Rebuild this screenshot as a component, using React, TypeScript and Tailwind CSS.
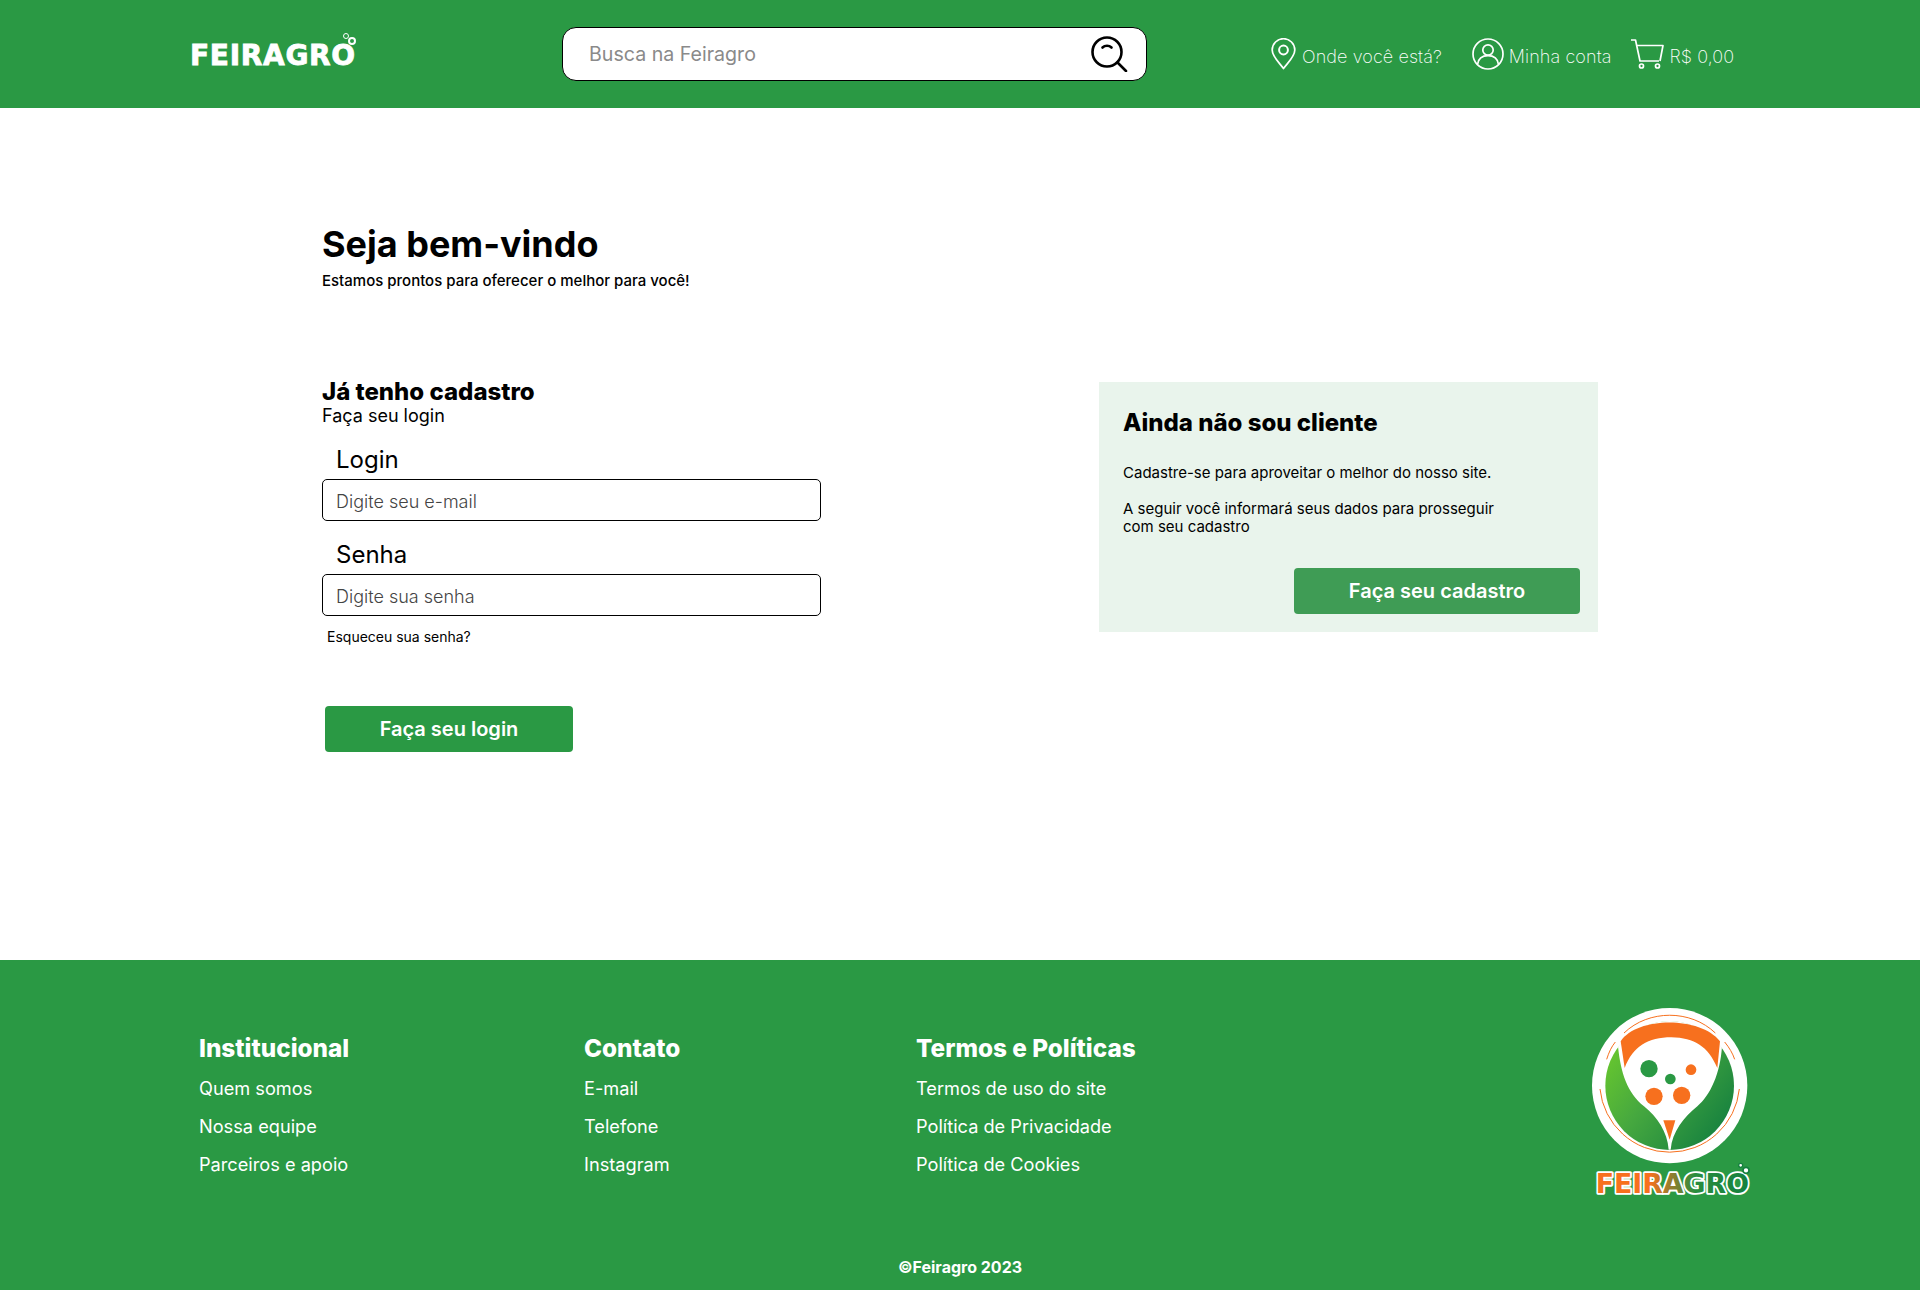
const font = { fontFamily: "Inter, 'Liberation Sans', sans-serif" };

function SearchIcon() {
  return (
    <svg width="37" height="36" viewBox="0 0 37 36" fill="none" stroke="#000" strokeWidth="2.6" strokeLinecap="round">
      <circle cx="16" cy="16" r="14.500" />
      <path d="M11.500 11.500c2.500-2.400 6.500-2.400 9 0" />
      <path d="M26.500 26.500l8.500 8.500" />
    </svg>
  );
}

function PinIcon() {
  return (
    <svg width="25" height="32" viewBox="0 0 25 32" fill="none" stroke="#fff" strokeWidth="1.700">
      <path d="M12.500 30.500C8 24.500 1.200 18.500 1.200 12A11.300 11.300 0 0 1 23.800 12c0 6.500-6.800 12.500-11.300 18.500z" strokeLinejoin="round" />
      <circle cx="12.500" cy="12" r="4.400" strokeWidth="2" />
    </svg>
  );
}

function UserIcon() {
  return (
    <svg width="32" height="32" viewBox="0 0 32 32" fill="none" stroke="#fff" strokeWidth="1.700">
      <circle cx="16" cy="16" r="15" />
      <circle cx="16" cy="12" r="5.200" />
      <path d="M5.500 26.500c.8-5.800 5-8.800 10.500-8.800s9.700 3 10.500 8.800" />
    </svg>
  );
}

function CartIcon() {
  return (
    <svg width="33" height="30" viewBox="0 0 33 30" fill="none" stroke="#fff" strokeWidth="1.700" strokeLinejoin="round">
      <path d="M0 1h4.500l4.500 21h19" />
      <path d="M5.800 6.500H32l-3 15.500" />
      <circle cx="10.500" cy="27" r="2" />
      <circle cx="26.500" cy="27" r="2" />
    </svg>
  );
}

function HeaderLogo() {
  return (
    <div
      className="relative -ml-[1px] w-[166px] text-[28px] leading-none font-bold tracking-[0.025em] text-white [-webkit-text-stroke:0.8px_white]"
      style={{ fontFamily: "'DejaVu Sans', sans-serif" }}
    >
      FEIRAGRO
      <span className="absolute right-0 top-[-5px] h-[8px] w-[8px] rounded-full border-2 border-white" />
      <span className="absolute right-[7px] top-[-9px] h-[6px] w-[6px] rounded-full border-[1.500px] border-white" />
    </div>
  );
}

function FooterLogo() {
  return (
    <svg width="160" height="192" viewBox="0 0 480 576" fill="none">
      <defs>
        <linearGradient id="leaf" x1="0" y1="0.15" x2="0.95" y2="0.85">
          <stop offset="0" stopColor="#6ccb2c" />
          <stop offset="0.45" stopColor="#46a83f" />
          <stop offset="1" stopColor="#15803f" />
        </linearGradient>
        <linearGradient id="word" x1="0" y1="0" x2="1" y2="0">
          <stop offset="0" stopColor="#f7701e" />
          <stop offset="0.35" stopColor="#f7701e" />
          <stop offset="0.65" stopColor="#2a8d3e" />
          <stop offset="1" stopColor="#14803f" />
        </linearGradient>
        <clipPath id="disc">
          <circle cx="233" cy="233" r="194" />
        </clipPath>
      </defs>
      <circle cx="233" cy="233" r="233" fill="#fff" />
      <circle cx="233" cy="233" r="193" fill="url(#leaf)" />
      <g clipPath="url(#disc)">
        <path
          d="M30 10H436V100L390 103C385 185 355 250 316 283 276 315 240 360 236 413H230C226 360 196 315 156 283 106 243 86 183 78 103L30 100Z"
          fill="#fff"
          transform="translate(0 12)"
        />
      </g>
      <path d="M24 243A210 210 0 0 0 442 243" stroke="#f7701e" strokeWidth="3" />
      <g transform="translate(0 12)">
        <path d="M44 142C51 120 58 105 70 90M96 63C170 -8 296 -8 370 63M398 90c14 17 24 34 30 52" stroke="#f7701e" strokeWidth="3" />
        <path d="M86 88c50-75 240-75 298 0l-8 80c-28-65-68-90-138-92-70 0-115 27-140 92z" fill="#f7701e" />
        <circle cx="171" cy="170" r="26" fill="#2a9944" />
        <circle cx="297" cy="173" r="16" fill="#f7701e" />
        <circle cx="235" cy="201" r="16" fill="#2a9944" />
        <circle cx="186" cy="253" r="26" fill="#f7701e" />
        <circle cx="269" cy="250" r="26" fill="#f7701e" />
        <path d="M214 325h36l-17 58z" fill="#f7701e" />
      </g>
      <text
        x="11"
        y="555"
        fontSize="82"
        fontWeight="700"
        textLength="460"
        lengthAdjust="spacingAndGlyphs"
        fill="url(#word)"
        stroke="#fff"
        strokeWidth="11"
        strokeLinejoin="round"
        paintOrder="stroke"
        style={{ fontFamily: "'DejaVu Sans', sans-serif" }}
      >
        FEIRAGRO
      </text>
      <circle cx="462" cy="487" r="9" stroke="#14803f" strokeWidth="5" fill="#fff" />
      <circle cx="446" cy="472" r="6" stroke="#14803f" strokeWidth="4" fill="#fff" />
    </svg>
  );
}

function Field({ label, placeholder, type }: { label: string; placeholder: string; type: string }) {
  return (
    <div>
      <label className="block pl-[14px] text-2xl leading-[29px] text-black">{label}</label>
      <input
        type={type}
        placeholder={placeholder}
        className="mt-[5px] block h-[42px] w-full rounded-[5px] border border-black bg-white px-[13px] pt-[2px] text-lg font-light outline-none placeholder:text-[#444]"
      />
    </div>
  );
}

const footerCols = [
  { title: "Institucional", width: "w-[385px]", links: ["Quem somos", "Nossa equipe", "Parceiros e apoio"] },
  { title: "Contato", width: "w-[332px]", links: ["E-mail", "Telefone", "Instagram"] },
  { title: "Termos e Políticas", width: "w-[400px]", links: ["Termos de uso do site", "Política de Privacidade", "Política de Cookies"] },
];

export default function App() {
  return (
    <div className="min-h-[1290px] bg-white text-black" style={font}>
      {/* HEADER */}
      <header className="flex h-[108px] items-center bg-[#2a9944] pl-[191px]">
        <div className="w-[371px] pt-[4px]">
          <HeaderLogo />
        </div>
        <div className="flex h-[54px] w-[585px] items-center justify-between rounded-[14px] border border-black bg-white pl-[26px] pr-[18px]">
          <span className="pt-[1px] text-[19.6px] text-[#8a8a8a]">Busca na Feiragro</span>
          <SearchIcon />
        </div>
        <nav className="ml-[124px] flex items-center text-lg font-extralight tracking-[0.005em] text-white">
          <div className="flex items-center gap-[6px]">
            <PinIcon />
            <span className="pt-[5px]">Onde você está?</span>
          </div>
          <div className="ml-[30px] flex items-center gap-[5px]">
            <UserIcon />
            <span className="pt-[5px]">Minha conta</span>
          </div>
          <div className="ml-[20px] flex items-center gap-[5px]">
            <CartIcon />
            <span className="pt-[5px]">R$ 0,00</span>
          </div>
        </nav>
      </header>

      {/* MAIN */}
      <main className="h-[852px] pl-[322px] pt-[113px]">
        <h1 className="text-4xl leading-[46px] font-bold">Seja bem-vindo</h1>
        <p className="mt-[5px] text-[15px] leading-[18px] font-medium">Estamos prontos para oferecer o melhor para você!</p>

        <div className="mt-[87px] flex items-start">
          <div className="w-[499px]">
            <h2 className="text-2xl leading-[29px] font-extrabold">Já tenho cadastro</h2>
            <p className="text-lg leading-[19px]">Faça seu login</p>
            <div className="mt-[20px] flex flex-col gap-[19px]">
              <Field label="Login" placeholder="Digite seu e-mail" type="text" />
              <Field label="Senha" placeholder="Digite sua senha" type="password" />
            </div>
            <p className="mt-[12px] pl-[5px] text-sm leading-[17px]">Esqueceu sua senha?</p>
            <button className="ml-[3px] mt-[61px] flex h-[46px] w-[248px] items-center justify-center rounded-[4px] bg-[#2a9944] text-xl font-semibold text-white">
              Faça seu login
            </button>
          </div>

          <div className="ml-[278px] mt-[5px] h-[250px] w-[499px] bg-[#e9f4ec] pl-[24px] pr-[18px] pt-[26px]">
            <h2 className="text-2xl leading-[30px] font-extrabold">Ainda não sou cliente</h2>
            <p className="mt-[26px] text-[15px] leading-[18px]">Cadastre-se para aproveitar o melhor do nosso site.</p>
            <p className="mt-[18px] w-[380px] text-[15px] leading-[18px]">
              A seguir você informará seus dados para prosseguir com seu cadastro
            </p>
            <div className="mt-[32px] flex justify-end">
              <button className="flex h-[46px] w-[286px] items-center justify-center rounded-[4px] bg-[#3f9c55] text-xl font-semibold text-white">
                Faça seu cadastro
              </button>
            </div>
          </div>
        </div>
      </main>

      {/* FOOTER */}
      <footer className="h-[330px] bg-[#2a9944] text-white">
        <div className="flex pl-[199px] pt-[73px]">
          {footerCols.map((col) => (
            <div key={col.title} className={col.width}>
              <h3 className="text-[24.3px] leading-[30px] font-extrabold">{col.title}</h3>
              <ul className="mt-[14px] flex flex-col gap-[16px] text-[18.2px] leading-[22px]">
                {col.links.map((link) => (
                  <li key={link}>{link}</li>
                ))}
              </ul>
            </div>
          ))}
          <div className="ml-[276px] mt-[-25px] h-[176px]">
            <FooterLogo />
          </div>
        </div>
        <p className="mt-[73px] text-center text-base leading-[20px] font-bold">©Feiragro 2023</p>
      </footer>
    </div>
  );
}
